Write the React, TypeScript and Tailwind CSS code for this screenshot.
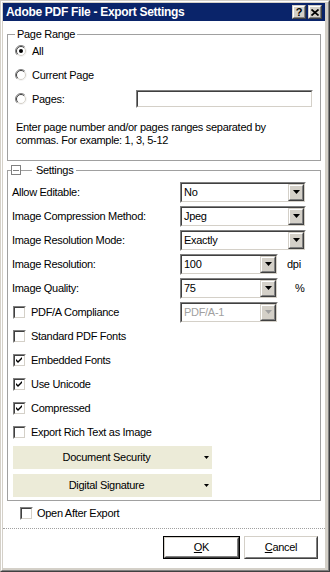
import React from "react";

function Sunken({ className = "", children }: { className?: string; children?: React.ReactNode }) {
  return (
    <div className={`border border-t-[#808080] border-l-[#808080] border-r-white border-b-white ${className}`}>
      <div className="h-full w-full border border-t-[#404040] border-l-[#404040] border-r-[#d4d0c8] border-b-[#d4d0c8] bg-white flex items-center">
        {children}
      </div>
    </div>
  );
}

function Raised({ className = "", children }: { className?: string; children?: React.ReactNode }) {
  return (
    <div className={`border border-t-[#d4d0c8] border-l-[#d4d0c8] border-r-[#404040] border-b-[#404040] ${className}`}>
      <div className="h-full w-full border border-t-white border-l-white border-r-[#808080] border-b-[#808080] bg-[#d4d0c8] flex items-center justify-center">
        {children}
      </div>
    </div>
  );
}

function Combo({ w, value, disabled = false }: { w: string; value: string; disabled?: boolean }) {
  return (
    <Sunken className={`${w} h-[21px]`}>
      <span className={`flex-1 pl-[2px] ${disabled ? "text-[#a0a0a0]" : "text-black"}`}>{value}</span>
      <Raised className="w-[16px] h-[17px]">
        <svg width="7" height="4" viewBox="0 0 7 4">
          <polygon points="0,0 7,0 3.5,4" fill={disabled ? "#a0a0a0" : "#000"} />
        </svg>
      </Raised>
    </Sunken>
  );
}

function Radio({ checked = false }: { checked?: boolean }) {
  return (
    <svg width="12" height="12" viewBox="0 0 12 12" className="shrink-0">
      <circle cx="6" cy="6" r="5" fill="#fff" />
      <path d="M2.1 9.9 A5.5 5.5 0 0 1 9.9 2.1" fill="none" stroke="#808080" strokeWidth="1" />
      <path d="M9.9 2.1 A5.5 5.5 0 0 1 2.1 9.9" fill="none" stroke="#f4f4f4" strokeWidth="1" />
      <path d="M2.8 9.2 A4.5 4.5 0 0 1 9.2 2.8" fill="none" stroke="#404040" strokeWidth="1" />
      <path d="M9.2 2.8 A4.5 4.5 0 0 1 2.8 9.2" fill="none" stroke="#d4d0c8" strokeWidth="1" />
      {checked && <circle cx="6" cy="6" r="2" fill="#000" />}
    </svg>
  );
}

function Checkbox({ checked = false }: { checked?: boolean }) {
  return (
    <div className="w-[13px] h-[13px] shrink-0 border border-t-[#808080] border-l-[#808080] border-r-white border-b-white">
      <div className="h-full w-full border border-t-[#404040] border-l-[#404040] border-r-[#d4d0c8] border-b-[#d4d0c8] bg-white">
        {checked && (
          <svg width="9" height="9" viewBox="0 0 9 9" className="block">
            <path d="M1 3 L3 5 L7 1 L7 3 L3 7 L1 5 Z" fill="#000" />
          </svg>
        )}
      </div>
    </div>
  );
}

function Row({ label, children }: { label: string; children: React.ReactNode }) {
  return (
    <div className="flex items-center h-[24px]">
      <div className="w-[168px] whitespace-nowrap">{label}</div>
      {children}
    </div>
  );
}

function CheckRow({ label, checked = false }: { label: string; checked?: boolean }) {
  return (
    <div className="flex items-center h-[24px] pl-[1px]">
      <Checkbox checked={checked} />
      <span className="ml-[5px] whitespace-nowrap">{label}</span>
    </div>
  );
}

function MenuButton({ label, className = "" }: { label: string; className?: string }) {
  return (
    <div className={`ml-[1px] w-[199px] h-[23px] bg-[#ecebd8] flex items-center ${className}`}>
      <span className="flex-1 text-center whitespace-nowrap">{label}</span>
      <span className="w-[12px] flex justify-center">
        <svg width="5" height="3" viewBox="0 0 5 3">
          <polygon points="0,0 5,0 2.5,3" fill="#000" />
        </svg>
      </span>
    </div>
  );
}

function DlgButton({ children, isDefault = false, w }: { children: React.ReactNode; isDefault?: boolean; w: string }) {
  const inner = (
    <div className="h-full w-full border border-t-[#d4d0c8] border-l-[#d4d0c8] border-r-[#404040] border-b-[#404040]">
      <div className="h-full w-full border border-t-white border-l-white border-r-[#808080] border-b-[#808080] bg-white flex items-center justify-center">
        {children}
      </div>
    </div>
  );
  return isDefault ? (
    <div className={`${w} h-[23px] border border-black`}>{inner}</div>
  ) : (
    <div className={`${w} h-[23px]`}>{inner}</div>
  );
}

export default function App() {
  return (
    <div className="w-[330px] h-[572px] font-['Liberation_Sans',Arial,sans-serif] text-[11px] tracking-[-0.3px] text-black leading-[13px] border border-t-[#d4d0c8] border-l-[#d4d0c8] border-r-[#404040] border-b-[#404040]">
      <div className="h-full w-full border border-t-white border-l-white border-r-[#808080] border-b-[#808080] bg-[#d4d0c8] pl-[1px] pt-[1px] pr-[3px] pb-[2px] flex flex-col">
        {/* Title bar */}
        <div className="h-[18px] bg-[#0a246a] flex items-center pl-[3px] pr-[3px] shrink-0">
          <span className="flex-1 text-white font-bold text-[12px] tracking-[-0.3px] whitespace-nowrap">
            Adobe PDF File - Export Settings
          </span>
          <div className="flex gap-[2px]">
            <Raised className="w-[14px] h-[14px]">
              <span className="font-bold text-[11px] leading-[10px] tracking-normal">?</span>
            </Raised>
            <Raised className="w-[14px] h-[14px]">
              <svg width="8" height="7" viewBox="0 0 8 7">
                <path d="M0.5 0.5 L7.5 6.5 M7.5 0.5 L0.5 6.5" stroke="#000" strokeWidth="1.7" />
              </svg>
            </Raised>
          </div>
        </div>

        {/* Body */}
        <div className="flex-1 bg-white flex flex-col">
          <fieldset className="mx-[4px] mt-[6px] border border-[#a0a0a0] pl-[7px] pr-[7px] pb-[13px] min-w-0">
            <legend className="px-[2px] h-[14px] leading-[14px]">Page Range</legend>
            <div className="flex items-center h-[20px]">
              <Radio checked />
              <span className="ml-[5px]">All</span>
            </div>
            <div className="mt-[4px] flex items-center h-[20px]">
              <Radio />
              <span className="ml-[5px]">Current Page</span>
            </div>
            <div className="mt-[4px] flex items-center h-[20px]">
              <div className="w-[121px] flex items-center">
                <Radio />
                <span className="ml-[5px]">Pages:</span>
              </div>
              <Sunken className="w-[178px] h-[18px]" />
            </div>
            <p className="mt-[12px] ml-[1px] leading-[13px] whitespace-nowrap">
              Enter page number and/or pages ranges separated by
              <br />
              commas. For example: 1, 3, 5-12
            </p>
          </fieldset>

          <fieldset className="mx-[4px] mt-[2px] border border-[#a0a0a0] pl-[4px] pr-[4px] pb-[3px] min-w-0">
            <legend className="ml-[-1px] pr-[3px] h-[14px] leading-[14px] flex items-center">
              <span className="w-[10px] h-[10px] border border-[#808080] bg-white flex items-center justify-center">
                <span className="w-[6px] h-[1px] bg-[#808080]" />
              </span>
              <span className="w-[11px] h-[1px] bg-[#a0a0a0]" />
              <span className="ml-[4px]">Settings</span>
            </legend>
            <div className="pt-[3px]">
              <Row label="Allow Editable:">
                <Combo w="w-[126px]" value="No" />
              </Row>
              <Row label="Image Compression Method:">
                <Combo w="w-[126px]" value="Jpeg" />
              </Row>
              <Row label="Image Resolution Mode:">
                <Combo w="w-[126px]" value="Exactly" />
              </Row>
              <Row label="Image Resolution:">
                <Combo w="w-[98px]" value="100" />
                <span className="ml-[9px]">dpi</span>
              </Row>
              <Row label="Image Quality:">
                <Combo w="w-[98px]" value="75" />
                <span className="ml-[17px]">%</span>
              </Row>
              <div className="flex items-center h-[24px]">
                <div className="w-[168px] flex items-center pl-[1px]">
                  <Checkbox />
                  <span className="ml-[5px] whitespace-nowrap">PDF/A Compliance</span>
                </div>
                <Combo w="w-[98px]" value="PDF/A-1" disabled />
              </div>
              <CheckRow label="Standard PDF Fonts" />
              <CheckRow label="Embedded Fonts" checked />
              <CheckRow label="Use Unicode" checked />
              <CheckRow label="Compressed" checked />
              <CheckRow label="Export Rich Text as Image" />
              <MenuButton label="Document Security" className="mt-[2px]" />
              <MenuButton label="Digital Signature" className="mt-[5px]" />
            </div>
          </fieldset>

          <div className="mt-[3px] ml-[17px] flex items-center h-[18px]">
            <Checkbox />
            <span className="ml-[4px]">Open After Export</span>
          </div>

          <div className="mt-[6px] border-t border-dotted border-[#a0a0a0]" />

          <div className="mt-[7px] flex justify-end gap-[4px] pr-[7px]">
            <DlgButton isDefault w="w-[77px]">
              <span>
                <span className="underline">O</span>K
              </span>
            </DlgButton>
            <DlgButton w="w-[74px]">
              <span>
                <span className="underline">C</span>ancel
              </span>
            </DlgButton>
          </div>
        </div>
      </div>
    </div>
  );
}
